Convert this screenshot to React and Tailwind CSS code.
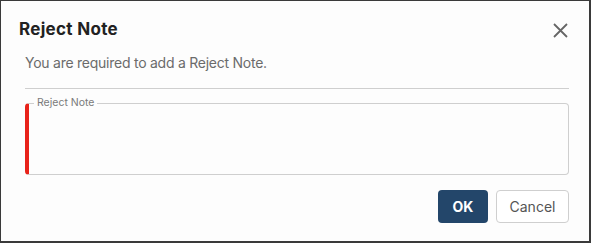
import React from 'react';

const RejectNoteDialog = () => {
  return (
    <div className="w-[591px] h-[243px] bg-[#fdfdfd] border border-r-2 border-b-2 border-[#3a3a3a] font-['Inter','Liberation_Sans',sans-serif]">
      {/* En-tête */}
      <div className="flex items-start justify-between pt-[16px] pl-[18px] pr-[21px]">
        <h2 className="text-[17px] leading-[24px] font-bold tracking-[0.3px] text-[#222]">Reject Note</h2>
        <button type="button" className="mt-[6px] text-[#666]" aria-label="Close">
          <svg width="15" height="15" viewBox="0 0 15 15" fill="none" stroke="currentColor" strokeWidth="1.8">
            <path d="M1 1 L14 14 M14 1 L1 14" />
          </svg>
        </button>
      </div>

      <div className="pl-[24px] pr-[20px]">
        <p className="mt-[12px] text-[14px] leading-[20px] tracking-[-0.25px] text-[#6b6b6b]">
          You are required to add a Reject Note.
        </p>

        <div className="mt-[15px] h-px bg-[#cfcfcf]" />

        {/* Champ note */}
        <fieldset className="mt-[7px] h-[79px] border border-[#cfcfcf] border-l-4 border-l-[#e8231a] rounded-[4px] pl-[5px]">
          <legend className="px-[3px] text-[10.5px] leading-[14px] text-[#7a7a7a]">Reject Note</legend>
        </fieldset>

        {/* Actions */}
        <div className="mt-[15px] flex justify-end gap-[8px]">
          <button
            type="button"
            className="h-[33px] w-[50px] rounded-[4px] bg-[#23466a] text-white text-[14px] font-bold"
          >
            OK
          </button>
          <button
            type="button"
            className="h-[33px] w-[73px] rounded-[4px] border border-[#cfcfcf] bg-white text-[#555] text-[14px]"
          >
            Cancel
          </button>
        </div>
      </div>
    </div>
  );
};

export default function App() {
  return <RejectNoteDialog />;
}
